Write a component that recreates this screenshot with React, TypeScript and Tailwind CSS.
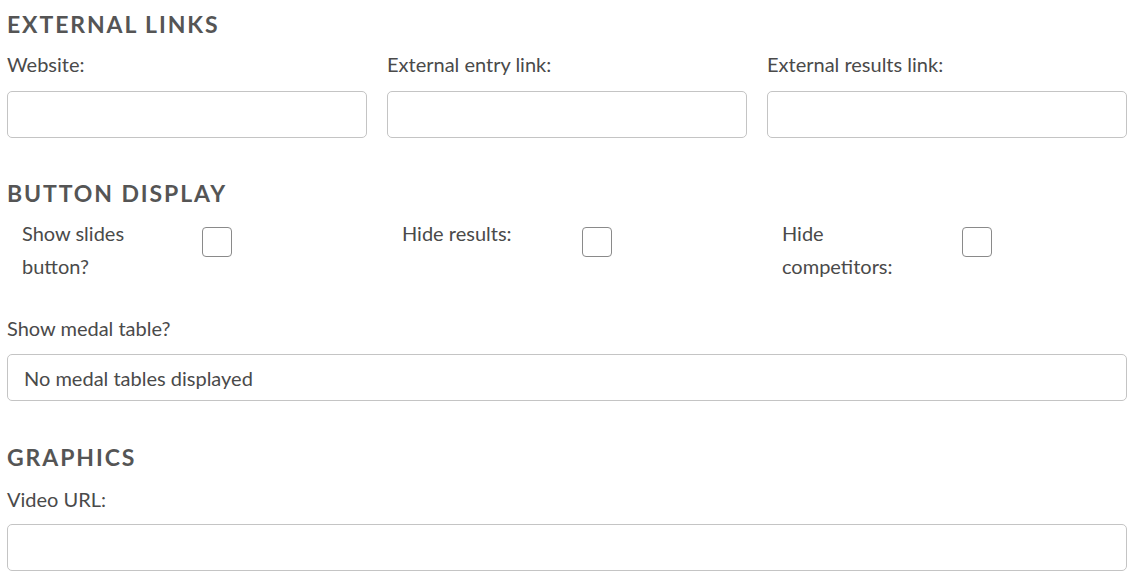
import React from "react";

const font = { fontFamily: "Lato, 'Open Sans', Arial, sans-serif" };

function Heading({ children }: { children: React.ReactNode }) {
  return (
    <h2 className="text-[23px] leading-[28px] font-bold uppercase tracking-[1.9px] text-[#555555]">
      {children}
    </h2>
  );
}

function Label({ children }: { children: React.ReactNode }) {
  return <div className="text-[20px] leading-[24px] text-[#4a4a4a]">{children}</div>;
}

function TextInput() {
  return <div className="h-[47px] w-full rounded-[5px] border border-[#c4c4c4] bg-white" />;
}

function CheckCol({ label }: { label: React.ReactNode }) {
  return (
    <div className="flex">
      <div className="w-[180px] px-[15px] text-[20px] leading-[33px] text-[#4a4a4a]">{label}</div>
      <div className="px-[15px] pt-[10px]">
        <div className="h-[30px] w-[30px] rounded-[4px] border border-[#8a8a8a] bg-white" />
      </div>
    </div>
  );
}

export default function App() {
  return (
    <div className="bg-white min-h-[581px] w-[1132px] pl-[7px] pr-[5px]" style={font}>
      <div className="pt-[10px]">
        <Heading>External links</Heading>
      </div>
      <div className="mt-[14px] grid grid-cols-3 gap-x-[20px]">
        <div>
          <Label>Website:</Label>
          <div className="mt-[15px]"><TextInput /></div>
        </div>
        <div>
          <Label>External entry link:</Label>
          <div className="mt-[15px]"><TextInput /></div>
        </div>
        <div>
          <Label>External results link:</Label>
          <div className="mt-[15px]"><TextInput /></div>
        </div>
      </div>

      <div className="mt-[41px]">
        <Heading>Button display</Heading>
      </div>
      <div className="mt-[10px] grid grid-cols-3 gap-x-[20px]">
        <CheckCol label={<>Show slides<br />button?</>} />
        <CheckCol label="Hide results:" />
        <CheckCol label={<>Hide<br />competitors:</>} />
      </div>

      <div className="mt-[33px]">
        <Label>Show medal table?</Label>
      </div>
      <div className="mt-[14px] flex h-[47px] w-full items-center rounded-[5px] border border-[#c4c4c4] bg-white pl-[16px] text-[20px] leading-[24px] text-[#4a4a4a]">
        No medal tables displayed
      </div>

      <div className="mt-[42px]">
        <Heading>Graphics</Heading>
      </div>
      <div className="mt-[16px]">
        <Label>Video URL:</Label>
      </div>
      <div className="mt-[13px]"><TextInput /></div>
    </div>
  );
}
